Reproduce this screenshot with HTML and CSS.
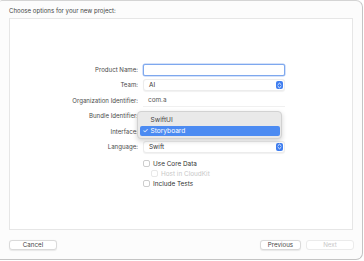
FILE: index.html
```html
<!DOCTYPE html>
<html>
<head>
<meta charset="utf-8">
<link rel="stylesheet" href="styles.css">
</head>
<body>
<div class="window">
  <p class="title">Choose options for your new project:</p>
  <div class="panel">
    <div class="form">
      <label class="lbl">Product Name:</label>
      <div class="field text focus"></div>

      <label class="lbl">Team:</label>
      <div class="field popup"><span>AI</span><span class="stepper"><svg width="5" height="7" viewBox="0 0 5 7"><path d="M1 2.6 L2.5 1.2 L4 2.6 M1 4.4 L2.5 5.8 L4 4.4" fill="none" stroke="#fff" stroke-width="0.9" stroke-linecap="round" stroke-linejoin="round"/></svg></span></div>

      <label class="lbl">Organization Identifier:</label>
      <div class="field text plain">com.a<span class="placeholder"></span></div>

      <label class="lbl">Bundle Identifier:</label>
      <div class="field empty"></div>

      <label class="lbl">Interface:</label>
      <div class="field empty"></div>

      <label class="lbl">Language:</label>
      <div class="field popup"><span>Swift</span><span class="stepper"><svg width="5" height="7" viewBox="0 0 5 7"><path d="M1 2.6 L2.5 1.2 L4 2.6 M1 4.4 L2.5 5.8 L4 4.4" fill="none" stroke="#fff" stroke-width="0.9" stroke-linecap="round" stroke-linejoin="round"/></svg></span></div>

      <div class="checks">
        <div class="check"><span class="box"></span>Use Core Data</div>
        <div class="check sub disabled"><span class="box"></span>Host in CloudKit</div>
        <div class="check"><span class="box"></span>Include Tests</div>
      </div>
    </div>
    <div class="menu">
      <div class="item">SwiftUI</div>
      <div class="item sel"><span class="tick">✓</span>Storyboard</div>
    </div>
  </div>
  <div class="footer">
    <button class="btn cancel">Cancel</button>
    <div class="right">
      <button class="btn prev">Previous</button>
      <button class="btn next" disabled>Next</button>
    </div>
  </div>
</div>
</body>
</html>
```
FILE: styles.css
```css
* { box-sizing: border-box; }
html, body { margin: 0; padding: 0; background: #ffffff; }
body { font-family: Inter, "Liberation Sans", sans-serif; font-size: 6.3px; color: #3a3a3a; }

.window {
  width: 363px;
  height: 260px;
  background: #fcfcfc;
  border-top: 1px solid #d4d4d4;
  border-right: 1px solid #c4c4c4;
  border-bottom: 1px solid #c4c4c4;
  border-radius: 2px 7px 7px 0;
  padding: 0 0 0 9px;
  display: flex;
  flex-direction: column;
}

.title {
  margin: 0;
  height: 17px;
  padding-top: 6px;
  font-size: 6.1px;
  color: #444;
}

.panel {
  position: relative;
  width: 344px;
  height: 212px;
  background: #ffffff;
  border: 1px solid #e6e6e6;
}

.form {
  display: grid;
  grid-template-columns: 128px 142px;
  column-gap: 5px;
  row-gap: 3.4px;
  align-items: center;
  padding-top: 45px;
}

.lbl {
  text-align: right;
  font-size: 6.1px;
  color: #4a4a4a;
  line-height: 12px;
}

.field {
  height: 12px;
  display: flex;
  align-items: center;
  padding-left: 5px;
  font-size: 6.4px;
  color: #333;
}
.field.focus {
  border: 1.5px solid #7ea8ee;
  border-radius: 2px;
  background: #fff;
  box-shadow: 0 0 0 0.5px #a9c4f4;
}
.field.plain {
  background: #ffffff;
  border-bottom: 1px solid #f0f0f0;
  color: #555;
}
.field.popup {
  border: 1px solid #ececec;
  border-radius: 3px;
  background: #fff;
  justify-content: space-between;
  padding-right: 1.5px;
  box-shadow: 0 0.5px 1px rgba(0,0,0,0.06);
}
.stepper {
  width: 7px;
  height: 8px;
  border-radius: 2px;
  background: #3f7ef0;
  display: flex;
  align-items: center;
  justify-content: center;
}

.checks {
  grid-column: 2;
  display: flex;
  flex-direction: column;
  gap: 3px;
  padding-top: 4px;
}
.check {
  display: flex;
  align-items: center;
  gap: 3px;
  font-size: 6.4px;
  color: #333;
  height: 7px;
}
.check.sub { padding-left: 8px; }
.check.disabled { color: #c8c8c8; }
.box {
  width: 7px;
  height: 7px;
  border: 1px solid #cdcdcd;
  border-radius: 2px;
  background: #fff;
}
.check.disabled .box { border-color: #e8e8e8; }

.menu {
  position: absolute;
  left: 127px;
  top: 92px;
  width: 145px;
  height: 28px;
  background: #e9e9e9;
  border: 0.5px solid #d2d2d2;
  border-radius: 4px;
  box-shadow: 0 2px 5px rgba(0,0,0,0.18);
  padding: 3px 1.5px;
}
.item {
  height: 10.5px;
  display: flex;
  align-items: center;
  padding-left: 11px;
  font-size: 6.6px;
  color: #444;
}
.item.sel {
  background: #4c8bf2;
  color: #fff;
  border-radius: 2px;
  padding-left: 3px;
}
.tick { width: 8px; font-size: 6.5px; }

.footer {
  display: flex;
  justify-content: space-between;
  align-items: center;
  width: 345px;
  padding-top: 9.5px;
}
.right { display: flex; gap: 5px; }
.btn {
  font-family: Inter, "Liberation Sans", sans-serif;
  font-size: 6.2px;
  height: 10.5px;
  padding: 0;
  border: 0.5px solid #dadada;
  border-radius: 3px;
  background: #ffffff;
  color: #444;
  box-shadow: 0 0.5px 1px rgba(0,0,0,0.08);
}
.cancel { width: 48px; }
.prev { width: 41px; }
.next { width: 48px; color: #c8c8c8; border-color: #ebebeb; box-shadow: none; }
```
